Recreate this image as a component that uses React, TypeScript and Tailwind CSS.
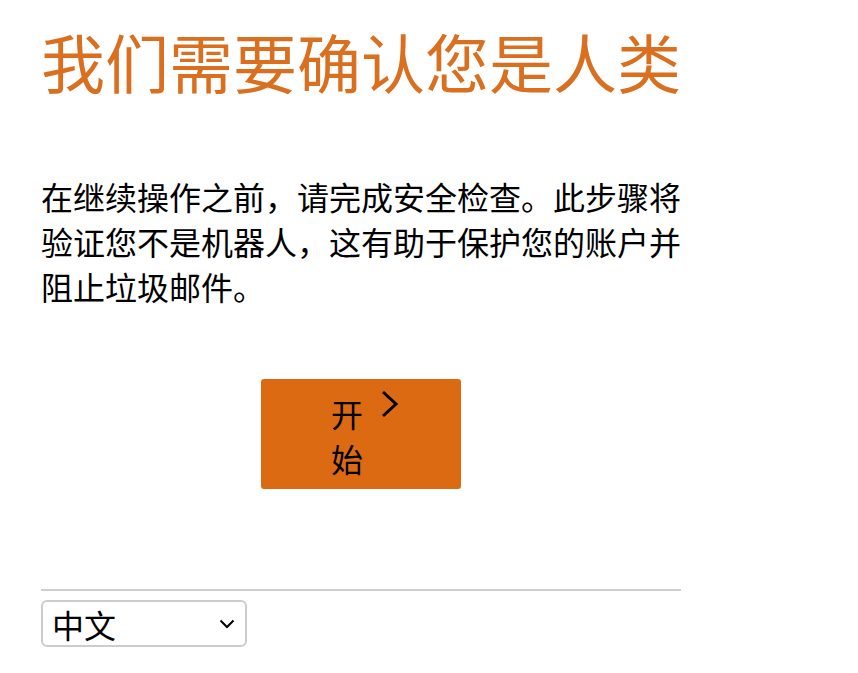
import React, { useState } from "react";

const cjk = { fontFamily: '"Noto Sans CJK SC", "Noto Sans", sans-serif' };

const Chevron: React.FC<{ className?: string }> = ({ className }) => (
  <svg viewBox="0 0 20 28" fill="none" stroke="currentColor" strokeWidth={3} className={className}>
    <path d="M3 2l13 12-13 12" />
  </svg>
);

export default function App() {
  const [lang, setLang] = useState("zh");

  return (
    <div className="min-h-screen bg-white px-[41px] pt-[12px]" style={cjk}>
      <div className="w-[640px]">
        {/* Heading */}
        <h1 className="text-[64px] leading-[96px] text-[#d96f1f] whitespace-nowrap">
          我们需要确认您是人类
        </h1>

        {/* Description */}
        <p className="mt-[66px] text-[32px] leading-[45px] text-black">
          在继续操作之前，请完成安全检查。此步骤将验证您不是机器人，这有助于保护您的账户并阻止垃圾邮件。
        </p>

        {/* Start button */}
        <div className="mt-[70px] flex justify-center">
          <button className="w-[200px] h-[110px] rounded-[3px] bg-[#dc6a12] flex justify-center items-start pt-[12px] pl-[9px] text-black">
            <span className="w-[32px] text-[32px] leading-[45px] text-left">开始</span>
            <Chevron className="w-[20px] h-[28px] ml-[17px] -mt-px" />
          </button>
        </div>

        {/* Footer */}
        <div className="mt-[100px] border-t-2 border-[#cfcfcf] pt-[9px]">
          <div className="relative w-[206px] h-[47px]">
            <select
              value={lang}
              onChange={(e) => setLang(e.target.value)}
              className="appearance-none w-full h-full rounded-[6px] border-2 border-[#cccccc] bg-white pl-[9px] text-[32px] leading-[40px] text-black"
              style={cjk}
            >
              <option value="zh">中文</option>
              <option value="en">English</option>
            </select>
            <svg viewBox="0 0 16 10" fill="none" stroke="currentColor" strokeWidth={2} className="pointer-events-none absolute right-[12px] top-[19px] w-[16px] h-[10px] text-black">
              <path d="M1.5 1.5L8 8l6.5-6.5" />
            </svg>
          </div>
        </div>
      </div>
    </div>
  );
}
